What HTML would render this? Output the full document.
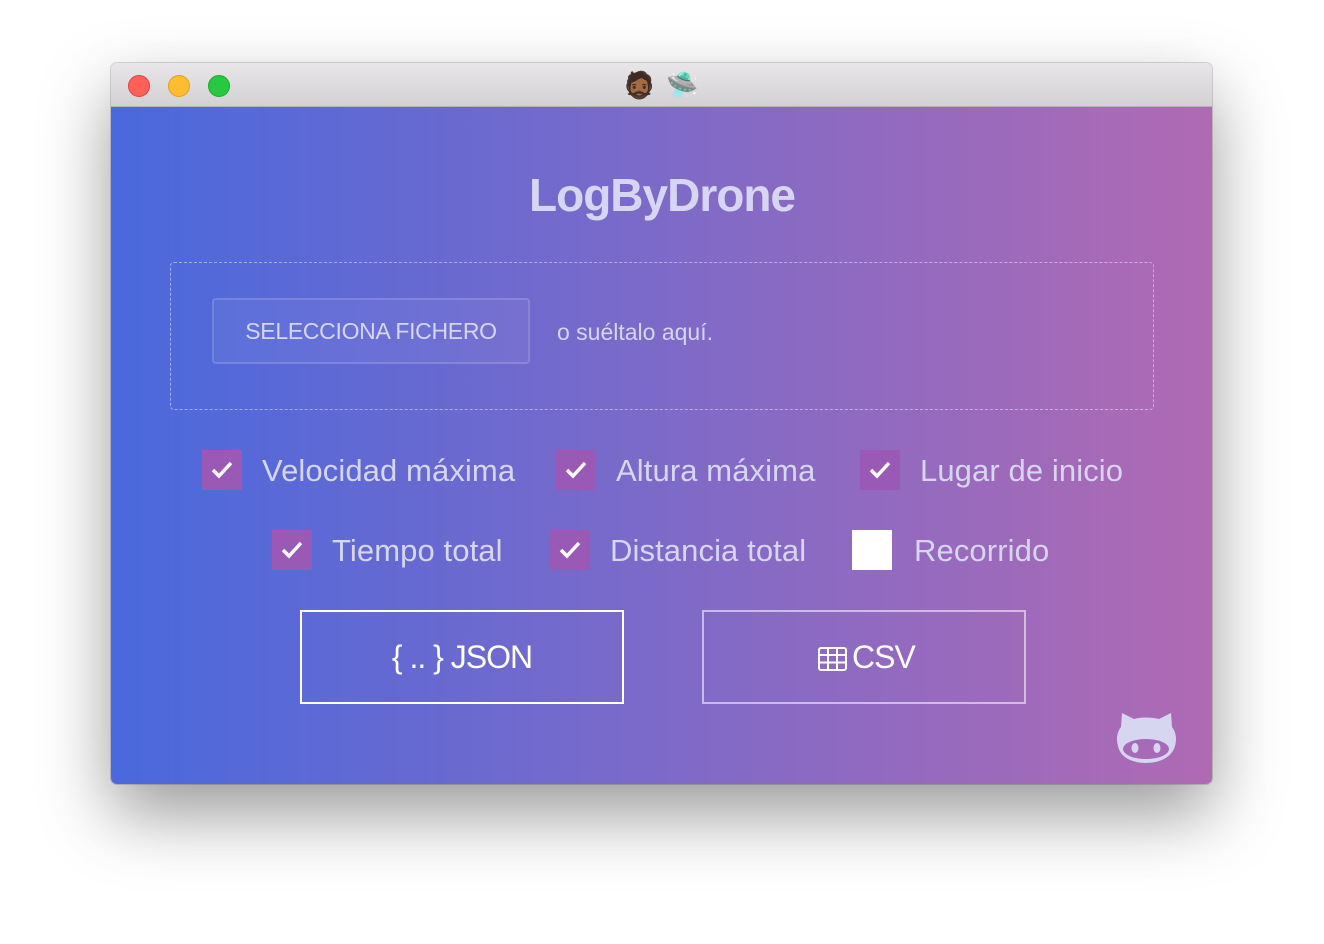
<!DOCTYPE html>
<html><head><meta charset="utf-8"><style>
*{margin:0;padding:0;box-sizing:border-box}
body{width:1324px;height:944px;background:#fff;position:relative;overflow:hidden;font-family:"Liberation Sans",sans-serif}
.win{position:absolute;left:111px;top:63px;width:1101px;height:721px;border-radius:6px;overflow:hidden;box-shadow:0 30px 70px rgba(0,0,0,.4),0 0 0 1px rgba(0,0,0,.15)}
.tb{position:absolute;left:0;top:0;width:100%;height:44px;background:linear-gradient(#e8e6e8,#d3d1d3);border-bottom:1px solid #b5b3b5}
.dot{position:absolute;top:12px;width:22px;height:22px;border-radius:50%}
.main{position:absolute;left:0;top:44px;width:100%;height:677px;background:linear-gradient(90deg,#4a69dd,#b06ab3)}
.a{position:absolute;white-space:nowrap}
.cb{position:absolute;width:40px;height:40px;background:#9b59b6}
.cb svg{position:absolute;left:9px;top:10px}
.lbl{position:absolute;font-size:31px;color:#d6d6f0;letter-spacing:0.1px;line-height:40px}
</style></head><body>
<div class="win">
<div class="tb">
<div class="dot" style="left:17px;background:#fe5f57;border:1px solid #e0443e"></div>
<div class="dot" style="left:57px;background:#febc2e;border:1px solid #dea123"></div>
<div class="dot" style="left:97px;background:#28c840;border:1px solid #1aab29"></div>
<div class="a" style="left:512px;top:7px;font-size:26px">🧔🏾</div>
<div class="a" style="left:555px;top:7px;font-size:26px">🛸</div>
</div>
<div class="main"></div>
</div>
<div class="a" style="left:0;width:1324px;text-align:center;top:168px;font-size:46px;font-weight:bold;color:#d6d6f3;letter-spacing:-1px">LogByDrone</div>
<div class="a" style="left:170px;top:262px;width:984px;height:148px;border:1px dashed rgba(230,230,255,.55);border-radius:4px"></div>
<div class="a" style="left:212px;top:298px;width:318px;height:66px;border:2px solid rgba(255,255,255,.15);border-radius:4px;background:rgba(255,255,255,.05);color:#d6d6f3;font-size:23px;text-align:center;line-height:62px;letter-spacing:-0.3px">SELECCIONA FICHERO</div>
<div class="a" style="left:557px;top:319px;font-size:23px;color:#d6d6f3;letter-spacing:0px">o suéltalo aquí.</div>

<div class="cb" style="left:202px;top:450px"><svg width="22" height="20" viewBox="0 0 22 20"><path d="M2 10l6 6L20 3" stroke="#fff" stroke-width="3.5" fill="none"/></svg></div>
<div class="lbl" style="left:262px;top:451px">Velocidad máxima</div>
<div class="cb" style="left:556px;top:450px"><svg width="22" height="20" viewBox="0 0 22 20"><path d="M2 10l6 6L20 3" stroke="#fff" stroke-width="3.5" fill="none"/></svg></div>
<div class="lbl" style="left:616px;top:451px">Altura máxima</div>
<div class="cb" style="left:860px;top:450px"><svg width="22" height="20" viewBox="0 0 22 20"><path d="M2 10l6 6L20 3" stroke="#fff" stroke-width="3.5" fill="none"/></svg></div>
<div class="lbl" style="left:920px;top:451px">Lugar de inicio</div>

<div class="cb" style="left:272px;top:530px"><svg width="22" height="20" viewBox="0 0 22 20"><path d="M2 10l6 6L20 3" stroke="#fff" stroke-width="3.5" fill="none"/></svg></div>
<div class="lbl" style="left:332px;top:531px">Tiempo total</div>
<div class="cb" style="left:550px;top:530px"><svg width="22" height="20" viewBox="0 0 22 20"><path d="M2 10l6 6L20 3" stroke="#fff" stroke-width="3.5" fill="none"/></svg></div>
<div class="lbl" style="left:610px;top:531px">Distancia total</div>
<div class="cb" style="left:852px;top:530px;background:#fff"></div>
<div class="lbl" style="left:914px;top:531px">Recorrido</div>

<div class="a" style="left:300px;top:610px;width:324px;height:94px;border:2px solid #fff;color:#fff;font-size:32px;text-align:center;line-height:90px;letter-spacing:-1px">{ .. } JSON</div>
<div class="a" style="left:702px;top:610px;width:324px;height:94px;border:2px solid rgba(255,255,255,.55);color:#fff;font-size:32px;line-height:90px;letter-spacing:-1px">
<svg style="position:absolute;left:114px;top:35px" width="29" height="24" viewBox="0 0 29 24"><rect x="1" y="1" width="27" height="22" rx="2" fill="none" stroke="#fff" stroke-width="2"/><path d="M1 8h27M1 15.5h27M10 1v22M19 1v22" stroke="#fff" stroke-width="2"/></svg>
<span style="position:absolute;left:148px">CSV</span></div>

<svg class="a" style="left:1116px;top:711px" width="61" height="52" viewBox="0 0 61 52"><path d="M6 2l12 6c8-2 17-2 25 0L55 2l1 14c4 5 5 12 3 19-3 11-15 17-29 17S4 46 2 35C0 28 1 21 5 16z" fill="#d6d6f0"/><ellipse cx="30" cy="38" rx="23" ry="10" fill="#a56bb6"/><ellipse cx="19" cy="37" rx="3.5" ry="5" fill="#d6d6f0"/><ellipse cx="41" cy="37" rx="3.5" ry="5" fill="#d6d6f0"/></svg>
</body></html>
